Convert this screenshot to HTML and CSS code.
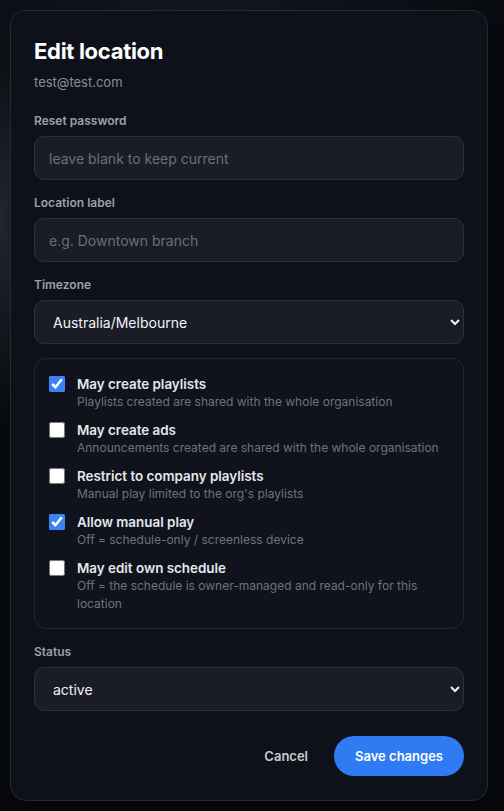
FILE: index.html
```html
<!DOCTYPE html>
<html lang="en">
<head>
    <meta charset="UTF-8">
    <title>Edit location</title>
    <link rel="stylesheet" href="styles.css">
</head>
<body>
    <div class="backdrop">
        <form class="modal" onsubmit="return false">
            <h2 class="modal-title">Edit location</h2>
            <div class="modal-sub">test@test.com</div>

            <div class="field">
                <label for="password">Reset password</label>
                <input type="password" id="password" placeholder="leave blank to keep current">
            </div>
            <div class="field">
                <label for="label">Location label</label>
                <input type="text" id="label" placeholder="e.g. Downtown branch">
            </div>
            <div class="field">
                <label for="tz">Timezone</label>
                <select id="tz">
                    <option>Australia/Melbourne</option>
                    <option>Australia/Sydney</option>
                    <option>Australia/Brisbane</option>
                </select>
            </div>

            <div class="perms">
                <label class="perm">
                    <input type="checkbox" checked>
                    <span class="perm-text">
                        <span class="perm-name">May create playlists</span>
                        <span class="perm-desc">Playlists created are shared with the whole organisation</span>
                    </span>
                </label>
                <label class="perm">
                    <input type="checkbox">
                    <span class="perm-text">
                        <span class="perm-name">May create ads</span>
                        <span class="perm-desc">Announcements created are shared with the whole organisation</span>
                    </span>
                </label>
                <label class="perm">
                    <input type="checkbox">
                    <span class="perm-text">
                        <span class="perm-name">Restrict to company playlists</span>
                        <span class="perm-desc">Manual play limited to the org's playlists</span>
                    </span>
                </label>
                <label class="perm">
                    <input type="checkbox" checked>
                    <span class="perm-text">
                        <span class="perm-name">Allow manual play</span>
                        <span class="perm-desc">Off = schedule-only / screenless device</span>
                    </span>
                </label>
                <label class="perm">
                    <input type="checkbox">
                    <span class="perm-text">
                        <span class="perm-name">May edit own schedule</span>
                        <span class="perm-desc">Off = the schedule is owner-managed and read-only for this location</span>
                    </span>
                </label>
            </div>

            <div class="field">
                <label for="status">Status</label>
                <select id="status">
                    <option>active</option>
                    <option>paused</option>
                    <option>disabled</option>
                </select>
            </div>

            <div class="actions">
                <button type="button" class="btn-ghost">Cancel</button>
                <button type="submit" class="btn-primary">Save changes</button>
            </div>
        </form>
    </div>
</body>
</html>
```

FILE: styles.css
```css
* {box-sizing: border-box}
html, body {margin: 0; height: 100%}
body {font-family: Inter, "Noto Sans", sans-serif; background: #05070b; color: #e5e7eb}
.backdrop {min-height: 100%; padding: 10px 16px 10px 10px; background: radial-gradient(ellipse 60px 220px at 0 220px, rgba(90,96,110,0.35), transparent), radial-gradient(ellipse 400px 60px at 200px 0, rgba(40,46,60,0.4), transparent)}
.modal {background: #0e111a; border: 1px solid #262a35; border-radius: 16px; padding: 26px 23px 24px; display: flex; flex-direction: column}
.modal-title {margin: 0; font-size: 22px; line-height: 28px; font-weight: 700; color: #fff; letter-spacing: -0.3px}
.modal-sub {margin: 8px 0 7px; font-size: 13px; line-height: 18px; color: #8a8e97}
.field {margin-top: 15px; display: flex; flex-direction: column}
.field label {font-size: 12px; line-height: 16px; font-weight: 600; color: #9ca0aa; margin-bottom: 7px}
.field input, .field select {height: 44px; width: 100%; background: #1a1d27; border: 1px solid #2d313d; border-radius: 10px; color: #f3f4f6; font-family: inherit; font-size: 14px; padding: 0 14px; outline: none}
.field input::placeholder {color: #6b6f7a}
.field select {padding: 0 4px 0 14px}
.perms {margin-top: 14px; border: 1px solid #232733; border-radius: 12px; padding: 16px 14px 15px; display: flex; flex-direction: column; gap: 10px; background: #10131c}
.perm {display: flex; align-items: flex-start; gap: 12px; cursor: pointer}
.perm input {width: 16px; height: 16px; margin: 1px 0 0; accent-color: #3b82f6; flex: none}
.perm-text {display: flex; flex-direction: column}
.perm-name {font-size: 13.4px; line-height: 18px; font-weight: 600; color: #e5e7eb}
.perm-desc {font-size: 12px; line-height: 18px; color: #6e727d}
.actions {display: flex; justify-content: flex-end; align-items: center; gap: 26px; margin-top: 25px}
.btn-ghost {background: none; border: none; color: #c9ccd3; font-family: inherit; font-size: 13px; font-weight: 600; padding: 0; cursor: pointer}
.btn-primary {background: #2f7bf1; color: #fff; border: none; border-radius: 20px; height: 40px; padding: 0 21px; font-family: inherit; font-size: 13px; font-weight: 600; cursor: pointer}
```
